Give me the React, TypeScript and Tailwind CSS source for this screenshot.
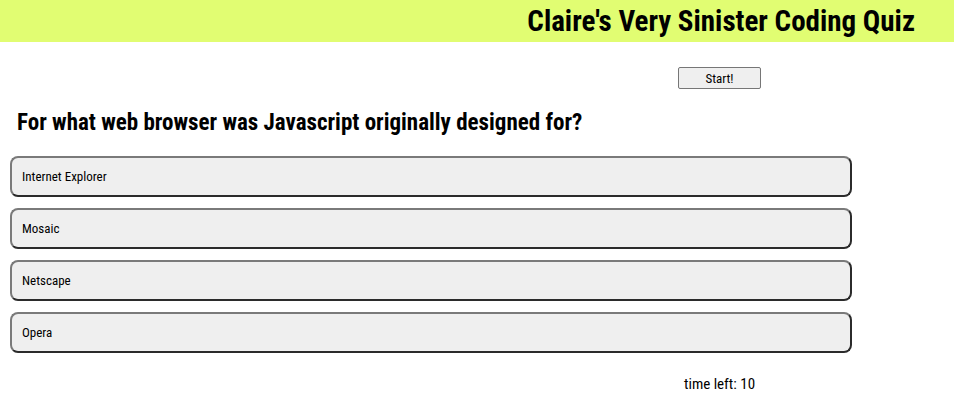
import React from "react";

const font = "font-['Roboto',sans-serif] font-stretch-[75%]";

export default function App() {
  const answers = ["Internet Explorer", "Mosaic", "Netscape", "Opera"];
  return (
    <div className={`min-h-[402px] bg-white text-black ${font}`}>
      <header className="flex h-[42px] items-center justify-end bg-[#e1fd72] pr-[39px]">
        <h1 className="text-[29px] font-bold leading-none">Claire's Very Sinister Coding Quiz</h1>
      </header>
      <div className="flex justify-end pr-[193px] pt-[25px]">
        <button className="h-[22px] w-[83px] rounded-[2px] border border-[#767676] bg-[#efefef] text-[13px] leading-none">
          Start!
        </button>
      </div>
      <h2 className="mt-[19px] pl-[17px] text-[23px] font-bold leading-[30px]">
        For what web browser was Javascript originally designed for?
      </h2>
      <div className="mt-[18px] flex w-[843px] flex-col gap-[11px] pl-[10px]">
        {answers.map((a) => (
          <button
            key={a}
            className="h-[41px] w-[842px] rounded-[8px] border-2 border-t-[#7a7a7a] border-l-[#7a7a7a] border-b-[#2b2b2b] border-r-[#2b2b2b] bg-[#efefef] pl-[10px] text-left text-[13px]"
          >
            {a}
          </button>
        ))}
      </div>
      <div className="mt-[20px] pl-[684px] text-[15px]">time left: 10</div>
    </div>
  );
}
